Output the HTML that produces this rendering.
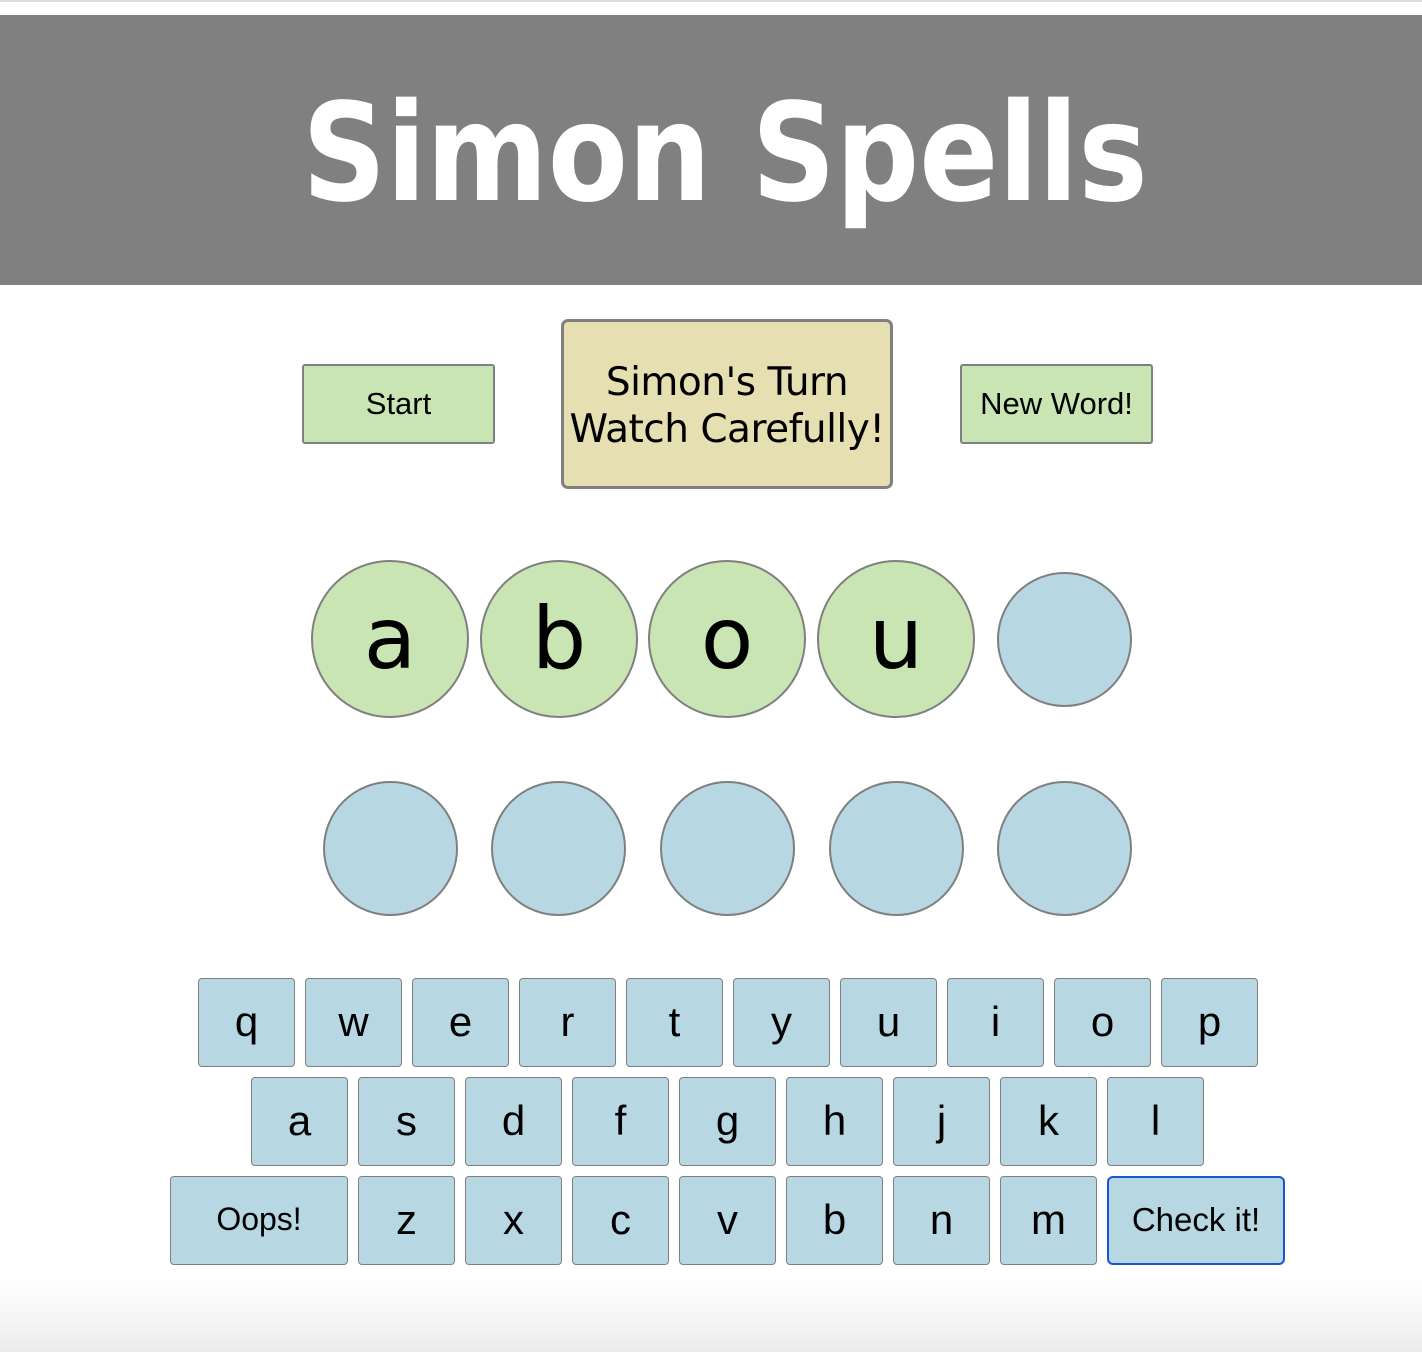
<!DOCTYPE html>
<html><head><meta charset="utf-8"><style>
*{margin:0;padding:0;box-sizing:border-box}
html,body{width:1422px;height:1352px;overflow:hidden;background:#fff;position:relative;font-family:"DejaVu Sans",sans-serif}
.topline{position:absolute;left:0;top:0;width:1422px;height:2px;background:#ddd}
.hdr{position:absolute;left:0;top:15px;width:1422px;height:270px;background:#808080}
.title{position:absolute;left:14px;top:86px;width:1422px;text-align:center;color:#fff;font:bold 136px/1 "DejaVu Sans",sans-serif;transform:scaleX(0.858);white-space:nowrap}
.btn{position:absolute;background:#c8e5b3;border:2px solid #808080;border-radius:3px;display:flex;align-items:center;justify-content:center;font:31px "Liberation Sans",sans-serif;color:#000}
.simon{position:absolute;left:561px;top:319px;width:332px;height:170px;background:#e5dfb1;border:3px solid #808080;border-radius:7px;text-align:center;font:39px/47px "DejaVu Sans",sans-serif;padding-top:37px;white-space:nowrap;letter-spacing:-0.5px}
.c{position:absolute;border:2px solid #7f7f7f;border-radius:50%;background:#b7d8e3;display:flex;align-items:center;justify-content:center;font:86px/1 "DejaVu Sans",sans-serif;color:#000}
.g{background:#c8e5b3;width:158px;height:158px;top:560px}
.k{position:absolute;width:97px;height:89px;background:#b7d8e3;border:1px solid #7f7f7f;border-radius:4px;display:flex;align-items:center;justify-content:center;font:42px "Liberation Sans",sans-serif;color:#000;padding-bottom:2px}
.foot{position:absolute;left:0;top:1280px;width:1422px;height:72px;background:linear-gradient(#fff,#ececec)}
</style></head><body>
<div class="topline"></div>
<div class="hdr"></div>
<div class="title">Simon Spells</div>
<div class="btn" style="left:302px;top:364px;width:193px;height:80px">Start</div>
<div class="simon">Simon's Turn<br>Watch Carefully!</div>
<div class="btn" style="left:960px;top:364px;width:193px;height:80px">New Word!</div>

<div class="c g" style="left:311px">a</div>
<div class="c g" style="left:480px">b</div>
<div class="c g" style="left:648px">o</div>
<div class="c g" style="left:817px">u</div>
<div class="c" style="left:997px;top:572px;width:135px;height:135px"></div>

<div class="c" style="left:323px;top:781px;width:135px;height:135px"></div>
<div class="c" style="left:491px;top:781px;width:135px;height:135px"></div>
<div class="c" style="left:660px;top:781px;width:135px;height:135px"></div>
<div class="c" style="left:829px;top:781px;width:135px;height:135px"></div>
<div class="c" style="left:997px;top:781px;width:135px;height:135px"></div>

<div class="k" style="left:198px;top:978px">q</div>
<div class="k" style="left:305px;top:978px">w</div>
<div class="k" style="left:412px;top:978px">e</div>
<div class="k" style="left:519px;top:978px">r</div>
<div class="k" style="left:626px;top:978px">t</div>
<div class="k" style="left:733px;top:978px">y</div>
<div class="k" style="left:840px;top:978px">u</div>
<div class="k" style="left:947px;top:978px">i</div>
<div class="k" style="left:1054px;top:978px">o</div>
<div class="k" style="left:1161px;top:978px">p</div>

<div class="k" style="left:251px;top:1077px">a</div>
<div class="k" style="left:358px;top:1077px">s</div>
<div class="k" style="left:465px;top:1077px">d</div>
<div class="k" style="left:572px;top:1077px">f</div>
<div class="k" style="left:679px;top:1077px">g</div>
<div class="k" style="left:786px;top:1077px">h</div>
<div class="k" style="left:893px;top:1077px">j</div>
<div class="k" style="left:1000px;top:1077px">k</div>
<div class="k" style="left:1107px;top:1077px">l</div>

<div class="k" style="left:170px;top:1176px;width:178px;font-size:32px">Oops!</div>
<div class="k" style="left:358px;top:1176px">z</div>
<div class="k" style="left:465px;top:1176px">x</div>
<div class="k" style="left:572px;top:1176px">c</div>
<div class="k" style="left:679px;top:1176px">v</div>
<div class="k" style="left:786px;top:1176px">b</div>
<div class="k" style="left:893px;top:1176px">n</div>
<div class="k" style="left:1000px;top:1176px">m</div>
<div class="k" style="left:1107px;top:1176px;width:178px;font-size:33px;border:2px solid #1a55d0;border-radius:6px">Check it!</div>
<div class="foot"></div>
</body></html>
